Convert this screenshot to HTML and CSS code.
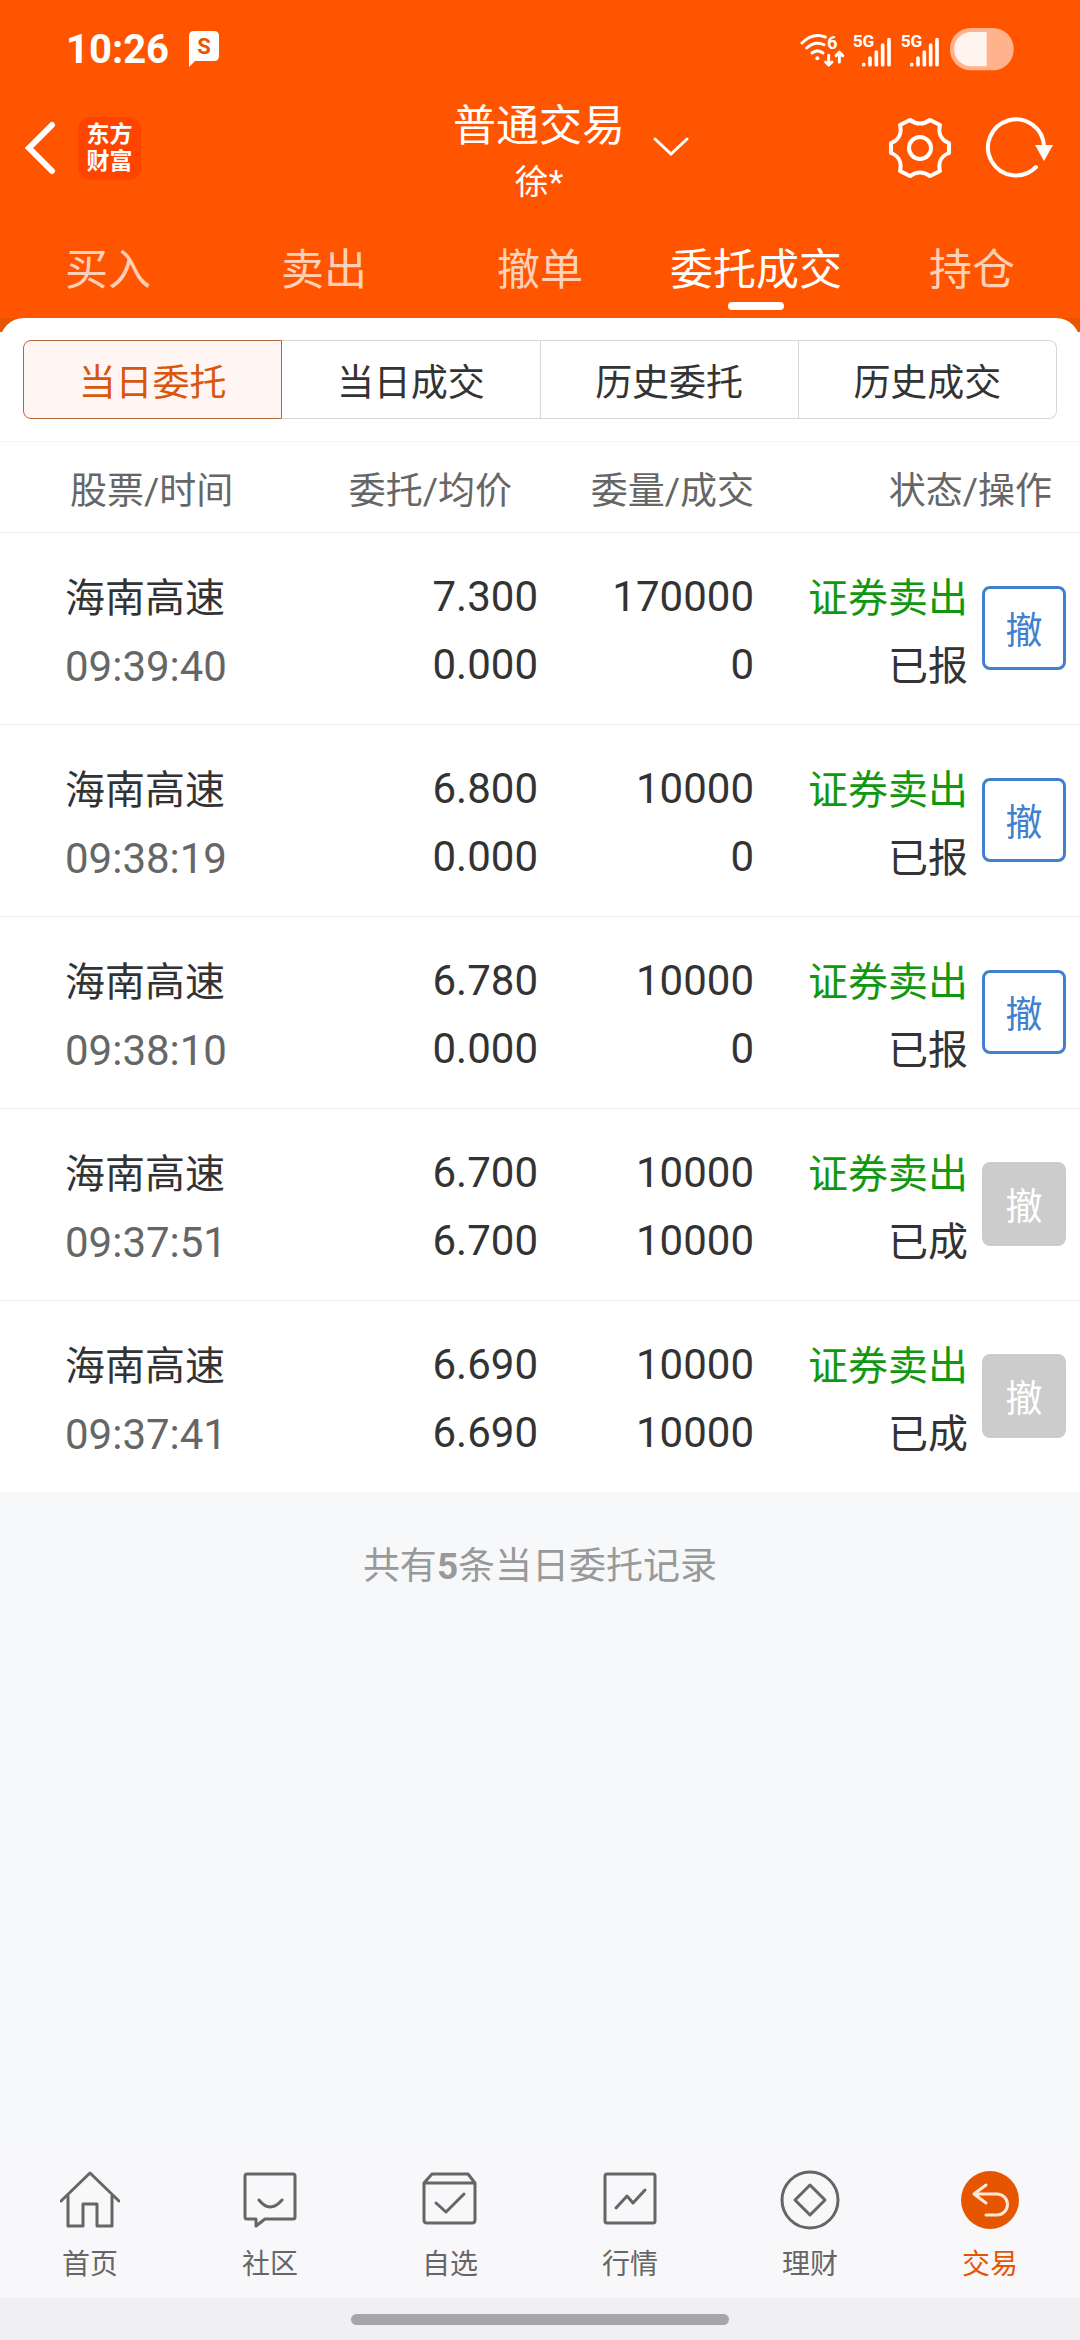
FILE: index.html
```html
<!DOCTYPE html>
<html lang="zh-CN">
  <head>
    <meta charset="UTF-8" />
    <meta name="viewport" content="width=device-width, initial-scale=1.0" />
    <title>普通交易 - 委托成交</title>
    <link rel="stylesheet" href="styles.css">
  </head>
  <body>
    <header class="header">
      <div class="status-bar">
        <span class="clock">10:26</span>
        <svg class="msg-icon" viewBox="0 0 30 36">
          <path d="M5 0H25Q30 0 30 5V25Q30 30 25 30H6L0 36V5Q0 0 5 0Z" fill="#fff" />
          <text x="15" y="23" text-anchor="middle">S</text>
        </svg>
        <svg class="status-icons" viewBox="60 50 642 135">
          <!-- wifi -->
          <g fill="none" stroke="#fff" stroke-width="9" stroke-linecap="round">
            <path d="M66 98Q98 66 136 80" />
            <path d="M80 113Q104 91 132 103" />
            <path d="M96 128Q112 115 129 128" />
            <path d="M146 135V163M137 155L146 164L156 155" />
            <path d="M178 155V128M168 136L178 126L188 136" />
          </g>
          <circle cx="112" cy="144" r="6" fill="#fff" />
          <text x="141" y="115" font-size="55">6</text>
          <!-- sim 1 -->
          <text x="218" y="109" font-size="52">5G</text>
          <g stroke="#fff" stroke-width="11" stroke-linecap="round">
            <path d="M251 162V163M270 143V163M289 125V163M308 104V163M327 88V163" />
          </g>
          <!-- sim 2 -->
          <text x="362" y="109" font-size="52">5G</text>
          <g stroke="#fff" stroke-width="11" stroke-linecap="round">
            <path d="M395 162V163M414 143V163M433 125V163M452 104V163M471 88V163" />
          </g>
          <!-- battery -->
          <rect x="510" y="53" width="191" height="127" rx="62" fill="#ffb28c" />
          <path d="M620 65H574A51 51 0 0 0 574 168H620Z" fill="#fff4ee" />
        </svg>
      </div>

      <div class="title-bar">
        <div class="side">
          <button class="icon-btn" aria-label="返回">
            <svg class="back-icon" viewBox="0 0 32 54">
              <path d="M28 4L5 27L28 50" fill="none" stroke="#fff" stroke-width="6" stroke-linecap="round" />
            </svg>
          </button>
          <div class="logo">东方<br />财富</div>
        </div>
        <button class="account">
          <span class="account-text">
            <span class="account-type">普通交易</span>
            <span class="account-name">徐*</span>
          </span>
          <svg class="arrow-icon" viewBox="0 0 36 22">
            <path d="M2 3L18 18L34 3" fill="none" stroke="#fff" stroke-width="3" stroke-linecap="round" />
          </svg>
        </button>
        <div class="side side-right">
          <button class="icon-btn" aria-label="设置">
            <svg class="tool-icon" viewBox="0 0 64 64">
              <path d="M22 4Q32 11 42 4L52 9C50 17 53 24 61 27V37C53 40 50 47 52 55L42 60Q32 53 22 60L12 55C14 47 11 40 3 37V27C11 24 14 17 12 9Z" fill="none" stroke="#fff" stroke-width="4" stroke-linejoin="round" />
              <circle cx="32" cy="32" r="11" fill="none" stroke="#fff" stroke-width="4" />
            </svg>
          </button>
          <button class="icon-btn" aria-label="刷新">
            <svg class="refresh-icon" viewBox="0 0 70 64">
              <path d="M52 51A28 28 0 1 1 60 31" fill="none" stroke="#fff" stroke-width="4" stroke-linecap="round" />
              <path d="M51 29H69L60 45Z" fill="#fff" />
            </svg>
          </button>
        </div>
      </div>

      <nav class="tabs">
        <a href="#">买入</a>
        <a href="#">卖出</a>
        <a href="#">撤单</a>
        <a href="#" class="active">委托成交</a>
        <a href="#">持仓</a>
      </nav>
    </header>

    <main class="main">
      <div class="sheet-top">
        <div class="sheet">
          <div class="segments">
            <button class="active">当日委托</button>
            <button>当日成交</button>
            <button>历史委托</button>
            <button>历史成交</button>
          </div>
        </div>
      </div>

      <table class="orders">
        <colgroup>
          <col class="col-name" />
          <col class="col-price" />
          <col class="col-amount" />
          <col />
          <col class="col-action" />
        </colgroup>
        <thead>
          <tr>
            <th class="name">股票/时间</th>
            <th class="price">委托/均价</th>
            <th>委量/成交</th>
            <th class="state" colspan="2">状态/操作</th>
          </tr>
        </thead>
        <tbody>
          <tr>
            <td class="name">海南高速<br /><span class="time">09:39:40</span></td>
            <td>7.300<br />0.000</td>
            <td>170000<br />0</td>
            <td class="state"><span class="sell">证券卖出</span><br />已报</td>
            <td class="action"><button class="cancel">撤</button></td>
          </tr>
          <tr>
            <td class="name">海南高速<br /><span class="time">09:38:19</span></td>
            <td>6.800<br />0.000</td>
            <td>10000<br />0</td>
            <td class="state"><span class="sell">证券卖出</span><br />已报</td>
            <td class="action"><button class="cancel">撤</button></td>
          </tr>
          <tr>
            <td class="name">海南高速<br /><span class="time">09:38:10</span></td>
            <td>6.780<br />0.000</td>
            <td>10000<br />0</td>
            <td class="state"><span class="sell">证券卖出</span><br />已报</td>
            <td class="action"><button class="cancel">撤</button></td>
          </tr>
          <tr>
            <td class="name">海南高速<br /><span class="time">09:37:51</span></td>
            <td>6.700<br />6.700</td>
            <td>10000<br />10000</td>
            <td class="state"><span class="sell">证券卖出</span><br />已成</td>
            <td class="action"><button class="cancel" disabled>撤</button></td>
          </tr>
          <tr>
            <td class="name">海南高速<br /><span class="time">09:37:41</span></td>
            <td>6.690<br />6.690</td>
            <td>10000<br />10000</td>
            <td class="state"><span class="sell">证券卖出</span><br />已成</td>
            <td class="action"><button class="cancel" disabled>撤</button></td>
          </tr>
        </tbody>
      </table>
      <p class="summary">共有<b>5</b>条当日委托记录</p>
    </main>

    <nav class="bottom-nav">
      <a href="#">
        <svg viewBox="0 0 60 60">
          <path d="M1 31L30 3L59 31M8 26V56H23V34H37V56H52V26" />
        </svg>
        首页
      </a>
      <a href="#">
        <svg viewBox="0 0 60 60">
          <path d="M7 4H53Q55 4 55 6V47Q55 49 53 49H25L16 56V49H7Q5 49 5 47V6Q5 4 7 4ZM19 30Q30 44 42 30" />
        </svg>
        社区
      </a>
      <a href="#">
        <svg viewBox="0 0 60 60">
          <path d="M4 13L12 4H48L55 13V50Q55 53 52 53H7Q4 53 4 50ZM4 13H55M16 33L26 42L44 24" />
        </svg>
        自选
      </a>
      <a href="#">
        <svg viewBox="0 0 60 60">
          <path d="M7 4H53Q55 4 55 6V51Q55 53 53 53H7Q5 53 5 51V6Q5 4 7 4ZM16 38L27 26L33 33L45 20" />
        </svg>
        行情
      </a>
      <a href="#">
        <svg viewBox="0 0 60 60">
          <circle cx="30" cy="30" r="28" />
          <path d="M30 15L45 30L30 45L15 30Z" />
        </svg>
        理财
      </a>
      <a href="#" class="active">
        <svg viewBox="0 0 60 60">
          <circle cx="30" cy="30" r="29" />
          <path d="M26 15L14 24L26 33M14 24H37A10 10 0 0 1 37 45H26" />
        </svg>
        交易
      </a>
    </nav>
    <div class="home-area">
      <div class="home-bar"></div>
    </div>
  </body>
</html>
```
FILE: styles.css
```css
* {
  box-sizing: border-box;
}
body {
  margin: 0;
  min-height: 100vh;
  display: flex;
  flex-direction: column;
  background-color: #f7f8fa;
  color: #333;
  font-family: Roboto, "Noto Sans CJK SC", sans-serif;
}
button {
  margin: 0;
  padding: 0;
  border: none;
  background: none;
  color: inherit;
  font-family: inherit;
  cursor: pointer;
}
a {
  color: inherit;
  text-decoration: none;
}
svg {
  display: block;
}

/* header */
.header {
  background-color: #ff5500;
  color: white;
}
.status-bar {
  display: flex;
  align-items: center;
  height: 98px;
  padding: 0 66px;
}
.clock {
  font-size: 40px;
  font-weight: bold;
}
.msg-icon {
  width: 30px;
  height: 36px;
  margin-left: 20px;
}
.msg-icon text {
  font-size: 22px;
  font-weight: bold;
  fill: #e65500;
}
.status-icons {
  width: 214px;
  height: 45px;
  margin-left: auto;
}
.status-icons text {
  font-weight: bold;
  fill: white;
}
.title-bar {
  display: flex;
  align-items: center;
  height: 100px;
  padding: 0 26px 0 24px;
}
.side {
  display: flex;
  flex: 1;
  align-items: center;
  gap: 22px;
}
.side-right {
  justify-content: flex-end;
  gap: 32px;
}
.back-icon {
  width: 32px;
  height: 54px;
}
.logo {
  width: 63px;
  height: 63px;
  padding-top: 4px;
  border-radius: 12px;
  background-color: #ff4400;
  font-size: 23px;
  font-weight: bold;
  line-height: 27px;
  text-align: center;
}
.account {
  position: relative;
  margin-top: 8px;
}
.account-text {
  display: flex;
  flex-direction: column;
  align-items: center;
}
.account-type {
  font-size: 43px;
  line-height: 60px;
}
.account-name {
  font-size: 34px;
  line-height: 52px;
}
.arrow-icon {
  position: absolute;
  top: 40px;
  left: 100%;
  width: 36px;
  height: 22px;
  margin-left: 28px;
}
.tool-icon {
  width: 64px;
  height: 64px;
}
.refresh-icon {
  width: 70px;
  height: 64px;
}
.tabs {
  display: flex;
  height: 120px;
}
.tabs a {
  display: flex;
  flex: 1;
  flex-direction: column;
  align-items: center;
  padding-top: 42px;
  color: #ffd0b5;
  font-size: 43px;
  line-height: 60px;
}
.tabs .active {
  color: white;
}
.tabs .active::after {
  content: "";
  width: 56px;
  height: 8px;
  margin-top: 2px;
  border-radius: 4px;
  background-color: white;
}

/* orders */
.main {
  flex: 1;
}
.sheet-top {
  background: linear-gradient(#e65500 14px, white 14px);
}
.sheet {
  padding: 22px 23px;
  border-bottom: 1px solid #f5f5f5;
  border-radius: 24px 24px 0 0;
  background-color: white;
}
.segments {
  display: flex;
}
.segments button {
  flex: 1;
  height: 79px;
  border: 1px solid #d5d7d8;
  border-left-width: 0;
  font-size: 37px;
}
.segments button:first-child {
  border-left-width: 1px;
  border-radius: 8px 0 0 8px;
}
.segments button:last-child {
  border-radius: 0 8px 8px 0;
}
.segments .active {
  border-color: #b5653a;
  background-color: #fff6f3;
  color: #d9560f;
}
.orders {
  width: 100%;
  table-layout: fixed;
  border-collapse: collapse;
  background-color: white;
}
.col-name {
  width: 30%;
}
.col-price,
.col-amount {
  width: 20%;
}
.col-action {
  width: 112px;
}
.orders th,
.orders td {
  padding: 0 2px 0 0;
  border-bottom: 1px solid #ebebeb;
  text-align: right;
}
.orders th {
  height: 90px;
  padding-top: 2px;
  color: #666;
  font-size: 37px;
  font-weight: normal;
}
.orders td {
  height: 192px;
  padding-top: 6px;
  font-size: 42px;
  line-height: 68px;
}
.orders tbody tr:last-child td {
  border-bottom: none;
}
.orders .name {
  padding-left: 65px;
  text-align: left;
}
.orders th.name {
  padding-left: 70px;
}
.orders th.price {
  padding-right: 28px;
}
.orders th.state {
  padding-right: 28px;
}
.orders td.name,
.orders td.state {
  padding-top: 10px;
  font-size: 40px;
}
.orders td.state {
  padding-right: 0;
}
.orders .time {
  color: #666;
  font-size: 42px;
}
.orders .sell {
  color: #109910;
}
.orders .action {
  padding-top: 0;
  padding-right: 14px;
}
.cancel {
  width: 84px;
  height: 84px;
  border: 3px solid #4080cc;
  border-radius: 8px;
  color: #4080cc;
  font-size: 37px;
  vertical-align: middle;
}
.cancel:disabled {
  border-color: #ccc;
  background-color: #ccc;
  color: white;
}
.summary {
  margin: 48px 0;
  color: #999;
  font-size: 37px;
  line-height: 54px;
  text-align: center;
}

/* bottom */
.bottom-nav {
  display: flex;
  height: 146px;
  background-color: #f8f8fb;
}
.bottom-nav a {
  display: flex;
  flex: 1;
  flex-direction: column;
  align-items: center;
  gap: 14px;
  padding-top: 18px;
  color: #666;
  font-size: 28px;
  line-height: 42px;
}
.bottom-nav svg {
  width: 60px;
  height: 60px;
  fill: none;
  stroke: #666;
  stroke-width: 3;
  stroke-linecap: round;
  stroke-linejoin: round;
}
.bottom-nav .active {
  color: #e65500;
}
.bottom-nav .active svg {
  stroke: #ffe8d6;
}
.bottom-nav .active circle {
  fill: #e65500;
  stroke: none;
}
.home-area {
  height: 42px;
  padding-top: 16px;
  background-color: #f0f0f2;
}
.home-bar {
  width: 35%;
  height: 11px;
  margin: 0 auto;
  border-radius: 6px;
  background-color: #a6a6a8;
}
```
